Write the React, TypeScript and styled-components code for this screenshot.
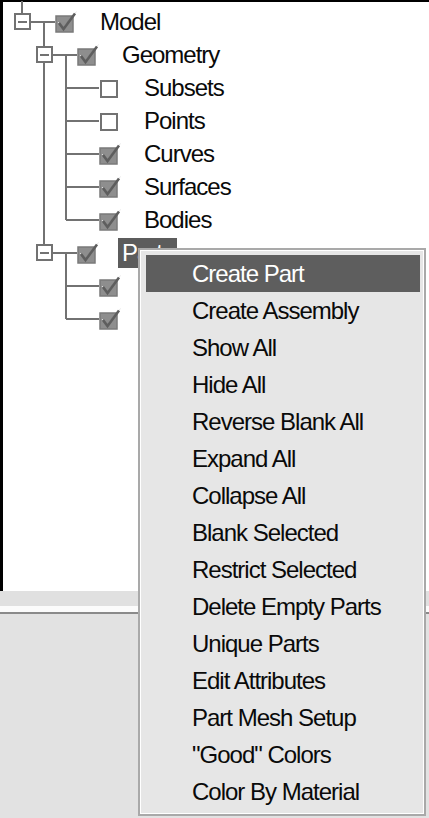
import React from "react";
import styled, { createGlobalStyle, css } from "styled-components";

const GlobalStyle = createGlobalStyle`
  html, body { margin: 0; padding: 0; background: #e2e2e2; }
  body { font-family: "Liberation Sans", Arial, sans-serif; }
  #root { width: 429px; height: 818px; }
`;

const Screen = styled.div`
  position: relative;
  width: 429px;
  height: 818px;
  overflow: hidden;
  display: flex;
  flex-direction: column;
  background: #e2e2e2;
`;

const TreePanel = styled.div`
  flex: none;
  height: 591px;
  box-sizing: border-box;
  background: #ffffff;
  border-left: 3px solid #000;
  border-top: 2px solid #000;
  padding: 3px 0 0 8px;
  display: flex;
  flex-direction: column;
`;

const Splitter = styled.div`
  flex: none;
  height: 15px;
  background: #e0e0e0;
  border-bottom: 6px solid #fbfbfb;
  box-shadow: 0 2px 0 #8a8a8a;
`;

const LowerArea = styled.div`
  flex: 1;
  background: #e2e2e2;
  margin-top: 2px;
`;

const Row = styled.div`
  display: flex;
  align-items: center;
  height: 33px;
  flex: none;
`;

const LINE = "#727272";

const GuideCell = styled.div<{ $up?: boolean; $down?: boolean; $right?: boolean; $left?: boolean }>`
  position: relative;
  flex: none;
  width: 22px;
  height: 100%;
  display: flex;
  align-items: center;
  justify-content: center;
  ${(p) =>
    (p.$up || p.$down) &&
    css`
      &::before {
        content: "";
        position: absolute;
        left: calc(50% - 1px);
        width: 2px;
        background: ${LINE};
        top: ${p.$up ? "-4px" : "50%"};
        bottom: ${p.$down ? "0" : "50%"};
      }
    `}
  ${(p) =>
    (p.$right || p.$left) &&
    css`
      &::after {
        content: "";
        position: absolute;
        top: calc(50% - 1px);
        height: 2px;
        background: ${LINE};
        left: ${p.$left ? "0" : "50%"};
        right: ${p.$right ? "0" : "50%"};
      }
    `}
`;

const Expander = styled.div`
  position: relative;
  z-index: 1;
  box-sizing: border-box;
  width: 17px;
  height: 17px;
  border: 2px solid ${LINE};
  background: #fff;
  display: flex;
  align-items: center;
  justify-content: center;
  &::after {
    content: "";
    width: 9px;
    height: 2px;
    background: ${LINE};
  }
`;

const CheckSlot = styled.div`
  flex: none;
  width: 20px;
  height: 24px;
  margin-right: 21px;
  display: flex;
  align-items: center;
  overflow: visible;
  svg { flex: none; }
`;

const Label = styled.div<{ $selected?: boolean }>`
  height: 30px;
  display: flex;
  align-items: center;
  padding: 0 4px;
  font-size: 24px;
  letter-spacing: -1px;
  white-space: nowrap;
  color: ${(p) => (p.$selected ? "#ffffff" : "#0a0a0a")};
  background: ${(p) => (p.$selected ? "#5c5c5c" : "transparent")};
`;

const Menu = styled.div`
  position: absolute;
  left: 138px;
  top: 248px;
  width: 288px;
  box-sizing: border-box;
  background: #e6e6e6;
  border: 2px solid #a9a9a9;
  box-shadow: inset 1px 1px 0 #ffffff, inset -1px -1px 0 #ffffff;
  padding: 5px 4px 4px 6px;
  display: flex;
  flex-direction: column;
`;

const MenuItem = styled.div<{ $active?: boolean }>`
  height: 37px;
  display: flex;
  align-items: center;
  padding-left: 46px;
  font-size: 24px;
  letter-spacing: -1px;
  white-space: nowrap;
  color: ${(p) => (p.$active ? "#ffffff" : "#0a0a0a")};
  background: ${(p) => (p.$active ? "#5e5e5e" : "transparent")};
`;

const CheckIcon: React.FC<{ on: boolean }> = ({ on }) =>
  on ? (
    <svg width="24" height="24" viewBox="0 0 24 24">
      <rect x="1" y="6" width="17" height="16" fill="#8e8e8e" stroke="#7a7a7a" strokeWidth="1.5" />
      <path d="M3 12 L8 18.5 L21.5 1.5" fill="none" stroke="#e6e6e6" strokeWidth="1" />
      <path d="M4 13 L8.5 19 L20 3.5" fill="none" stroke="#5e5e5e" strokeWidth="2.6" />
    </svg>
  ) : (
    <svg width="24" height="24" viewBox="0 0 24 24">
      <rect x="2" y="5" width="16" height="16" fill="#ffffff" stroke={LINE} strokeWidth="2" />
    </svg>
  );

type Ancestor = "blank" | "pipe";
type NodeRow = {
  label: string;
  ancestors: Ancestor[];
  expander: boolean;
  down: boolean;
  open: boolean;
  checked: boolean;
  selected?: boolean;
};

const rows: NodeRow[] = [
  { label: "Model", ancestors: [], expander: true, down: false, open: true, checked: true },
  { label: "Geometry", ancestors: ["blank"], expander: true, down: true, open: true, checked: true },
  { label: "Subsets", ancestors: ["blank", "pipe"], expander: false, down: true, open: false, checked: false },
  { label: "Points", ancestors: ["blank", "pipe"], expander: false, down: true, open: false, checked: false },
  { label: "Curves", ancestors: ["blank", "pipe"], expander: false, down: true, open: false, checked: true },
  { label: "Surfaces", ancestors: ["blank", "pipe"], expander: false, down: true, open: false, checked: true },
  { label: "Bodies", ancestors: ["blank", "pipe"], expander: false, down: false, open: false, checked: true },
  { label: "Parts", ancestors: ["blank"], expander: true, down: false, open: true, checked: true, selected: true },
  { label: "", ancestors: ["blank", "blank"], expander: false, down: true, open: false, checked: true },
  { label: "", ancestors: ["blank", "blank"], expander: false, down: false, open: false, checked: true },
];

const menuItems = [
  "Create Part",
  "Create Assembly",
  "Show All",
  "Hide All",
  "Reverse Blank All",
  "Expand All",
  "Collapse All",
  "Blank Selected",
  "Restrict Selected",
  "Delete Empty Parts",
  "Unique Parts",
  "Edit Attributes",
  "Part Mesh Setup",
  "\"Good\" Colors",
  "Color By Material",
];

export default function App() {
  return (
    <>
      <GlobalStyle />
      <Screen>
        <TreePanel>
          {rows.map((r, i) => (
            <Row key={i}>
              {r.ancestors.map((a, j) => (
                <GuideCell key={j} $up={a === "pipe"} $down={a === "pipe"} />
              ))}
              <GuideCell $up $down={r.down} $right>
                {r.expander && <Expander />}
              </GuideCell>
              <GuideCell $left $right $down={r.open && r.expander} />
              <CheckSlot>
                <CheckIcon on={r.checked} />
              </CheckSlot>
              {r.label && <Label $selected={r.selected}>{r.label}</Label>}
            </Row>
          ))}
        </TreePanel>
        <Splitter />
        <LowerArea />
        <Menu>
          {menuItems.map((m, i) => (
            <MenuItem key={m} $active={i === 0}>
              {m}
            </MenuItem>
          ))}
        </Menu>
      </Screen>
    </>
  );
}
